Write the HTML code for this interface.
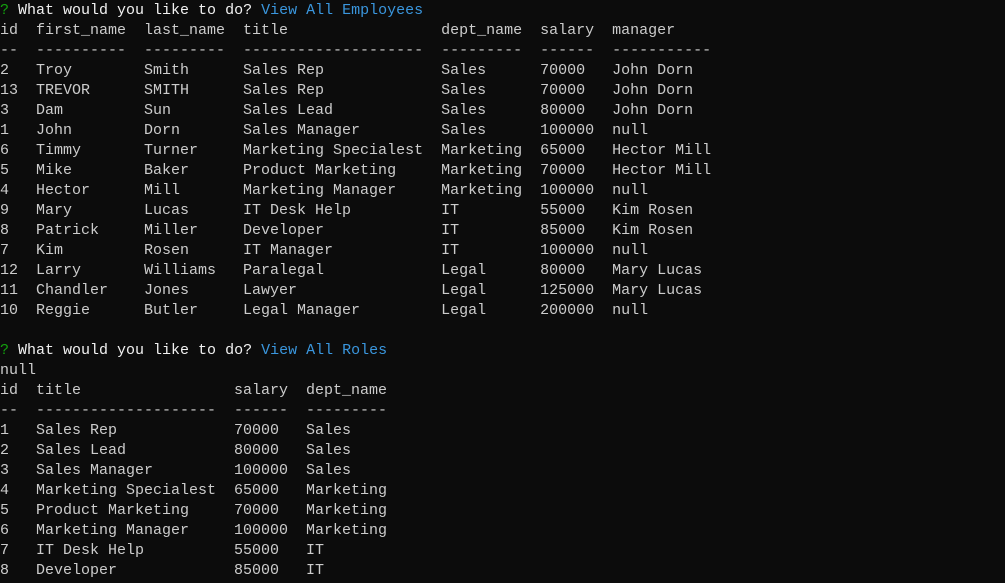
<!DOCTYPE html>
<html><head><style>
html,body{margin:0;padding:0;background:#0c0c0c;width:1005px;height:583px;overflow:hidden}
pre{margin:0;padding-top:1px;font-family:"Liberation Mono",monospace;font-size:15px;line-height:20px;color:#cccccc;letter-spacing:0}
.g{color:#13a10e}.b{color:#3a96dd}.w{color:#f2f2f2}
</style></head><body><pre><span class="g">?</span> <span class="w">What would you like to do?</span> <span class="b">View All Employees</span>
id  first_name  last_name  title                 dept_name  salary  manager
--  ----------  ---------  --------------------  ---------  ------  -----------
2   Troy        Smith      Sales Rep             Sales      70000   John Dorn
13  TREVOR      SMITH      Sales Rep             Sales      70000   John Dorn
3   Dam         Sun        Sales Lead            Sales      80000   John Dorn
1   John        Dorn       Sales Manager         Sales      100000  null
6   Timmy       Turner     Marketing Specialest  Marketing  65000   Hector Mill
5   Mike        Baker      Product Marketing     Marketing  70000   Hector Mill
4   Hector      Mill       Marketing Manager     Marketing  100000  null
9   Mary        Lucas      IT Desk Help          IT         55000   Kim Rosen
8   Patrick     Miller     Developer             IT         85000   Kim Rosen
7   Kim         Rosen      IT Manager            IT         100000  null
12  Larry       Williams   Paralegal             Legal      80000   Mary Lucas
11  Chandler    Jones      Lawyer                Legal      125000  Mary Lucas
10  Reggie      Butler     Legal Manager         Legal      200000  null

<span class="g">?</span> <span class="w">What would you like to do?</span> <span class="b">View All Roles</span>
null
id  title                 salary  dept_name
--  --------------------  ------  ---------
1   Sales Rep             70000   Sales
2   Sales Lead            80000   Sales
3   Sales Manager         100000  Sales
4   Marketing Specialest  65000   Marketing
5   Product Marketing     70000   Marketing
6   Marketing Manager     100000  Marketing
7   IT Desk Help          55000   IT
8   Developer             85000   IT
</pre></body></html>
